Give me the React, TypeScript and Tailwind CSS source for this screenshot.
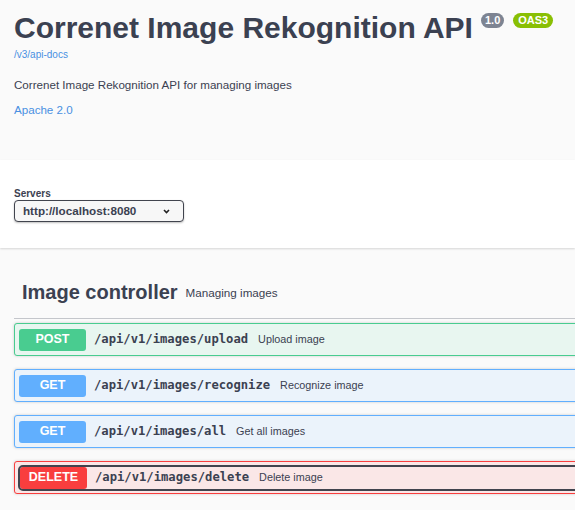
/** Swagger-style API docs page — Image Rekognition API */

type Operation = {
  method: "POST" | "GET" | "DELETE";
  path: string;
  summary: string;
  focused?: boolean;
};

const OPERATIONS: Operation[] = [
  { method: "POST", path: "/api/v1/images/upload", summary: "Upload image" },
  { method: "GET", path: "/api/v1/images/recognize", summary: "Recognize image" },
  { method: "GET", path: "/api/v1/images/all", summary: "Get all images" },
  { method: "DELETE", path: "/api/v1/images/delete", summary: "Delete image", focused: true },
];

const METHOD_STYLES: Record<Operation["method"], { box: string; badge: string }> = {
  POST: { box: "border-[#49cc90] bg-[#e8f6f0]", badge: "bg-[#49cc90]" },
  GET: { box: "border-[#61affe] bg-[#ebf3fb]", badge: "bg-[#61affe]" },
  DELETE: { box: "border-[#f93e3e] bg-[#fae7e7]", badge: "bg-[#f93e3e]" },
};

function OperationRow({ op }: { op: Operation }) {
  const styles = METHOD_STYLES[op.method];
  return (
    <div
      className={`mb-[13px] flex h-[33px] items-center rounded-[3px] border shadow-[0_0_3px_rgba(0,0,0,0.19)] ${
        op.focused ? "pl-[5px]" : "pl-[4px]"
      } ${styles.box}`}
    >
      <div
        className={`flex flex-1 items-center rounded-[3px] ${
          op.focused ? "outline-2 outline-solid outline-[#41444e]" : ""
        }`}
      >
        <span
          className={`flex h-[22px] w-[67px] shrink-0 items-center justify-center rounded-[3px] text-[12.5px] font-bold text-white ${styles.badge}`}
        >
          {op.method}
        </span>
        <span className="ml-[8px] font-['DejaVu_Sans_Mono',monospace] text-[12.2px] font-semibold text-[#3b4151]">
          {op.path}
        </span>
        <span className="ml-[10px] text-[10.8px] text-[#3b4151]">{op.summary}</span>
      </div>
    </div>
  );
}

export default function App() {
  return (
    <div className="min-h-[510px] w-full overflow-hidden bg-[#fafafa] font-['Liberation_Sans',Arial,sans-serif] text-[#3b4151]">
      {/* info */}
      <section className="h-[160px] px-[14px] pt-[11px]">
        <div className="flex items-start">
          <h2 className="whitespace-nowrap text-[30px] font-bold leading-[34px]">
            Correnet Image Rekognition API
          </h2>
          <span className="ml-[8px] mt-[2px] rounded-full bg-[#7d8492] px-[4px] text-[11px] font-bold leading-[15px] text-white">
            1.0
          </span>
          <span className="ml-[9px] mt-[2px] rounded-full bg-[#89bf04] px-[5px] text-[11px] font-bold leading-[15px] text-white">
            OAS3
          </span>
        </div>
        <a className="mt-[4px] block text-[10px] leading-[12px] text-[#4990e2]">/v3/api-docs</a>
        <p className="mt-[17px] text-[11.6px] leading-[14px]">
          Correnet Image Rekognition API for managing images
        </p>
        <a className="mt-[11px] block text-[11.6px] leading-[14px] text-[#4990e2]">Apache 2.0</a>
      </section>

      {/* servers */}
      <section className="h-[88px] bg-white px-[14px] pt-[28px] shadow-[0_1px_2px_0_rgba(0,0,0,0.15)]">
        <label className="block text-[10px] font-bold leading-[12px]">Servers</label>
        <div className="flex h-[22px] w-[170px] items-center rounded-[4px] border-[1.5px] border-[#41444e] bg-[#f7f7f7] pl-[8px] shadow-[0_1px_2px_0_rgba(0,0,0,0.25)]">
          <span className="text-[11.67px] font-bold leading-[14px]">http://localhost:8080</span>
          <svg width="7" height="5" viewBox="0 0 7 5" className="ml-[27px] mt-[1px]">
            <path d="M1 1 L3.5 3.5 L6 1" fill="none" stroke="#222" strokeWidth="1.6" />
          </svg>
        </div>
      </section>

      {/* tag section */}
      <section className="w-[640px] pl-[14px] pt-[33px]">
        <div className="flex items-center border-b border-[#c4c6cb] pb-[14px] pl-[8px]">
          <h3 className="text-[20px] font-bold leading-[23px]">Image controller</h3>
          <small className="pl-[8px] pt-[1px] text-[11.67px]">Managing images</small>
        </div>
        <div className="pt-[4px]">
          {OPERATIONS.map((op) => (
            <OperationRow key={op.path} op={op} />
          ))}
        </div>
      </section>
    </div>
  );
}
